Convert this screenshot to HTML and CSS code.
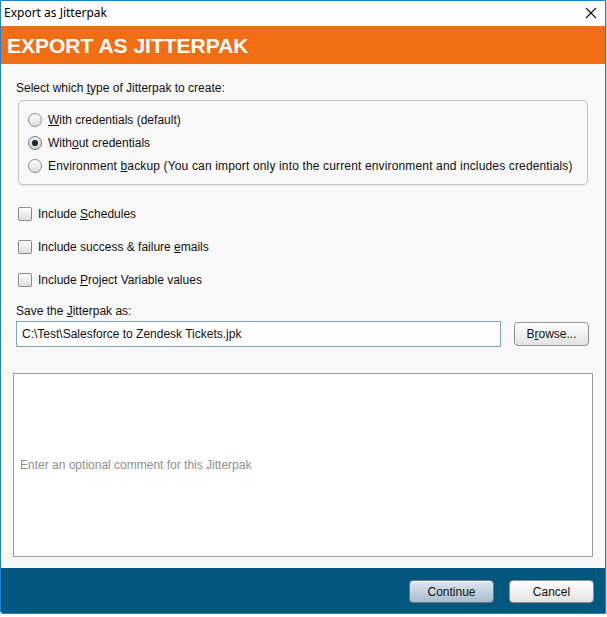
FILE: index.html
```html
<!DOCTYPE html>
<html lang="en">
<head>
  <meta charset="UTF-8" />
  <title>Export as Jitterpak</title>
  <link rel="stylesheet" href="styles.css">
</head>
<body>
  <div class="window">
    <div class="titlebar">
      <span class="title">Export as Jitterpak</span>
      <svg class="close" width="12" height="12" viewBox="0 0 12 12">
        <path d="M1 1 L11 11 M11 1 L1 11" stroke="#111" stroke-width="1.1" fill="none" />
      </svg>
    </div>

    <div class="banner">EXPORT AS JITTERPAK</div>

    <div class="content">
      <div class="label">Select which <u>t</u>ype of Jitterpak to create:</div>
      <div class="groupbox">
        <div class="row"><span class="radio"></span><span><u>W</u>ith credentials (default)</span></div>
        <div class="row"><span class="radio checked"></span><span>With<u>o</u>ut credentials</span></div>
        <div class="row"><span class="radio"></span><span class="wide">Environment <u>b</u>ackup (You can import only into the current environment and includes credentials)</span></div>
      </div>

      <div class="checks">
        <div class="check-row"><span class="checkbox"></span><span>Include <u>S</u>chedules</span></div>
        <div class="check-row"><span class="checkbox"></span><span>Include success &amp; failure <u>e</u>mails</span></div>
        <div class="check-row"><span class="checkbox"></span><span>Include <u>P</u>roject Variable values</span></div>
      </div>

      <div class="label save-label">Save the <u>J</u>itterpak as:</div>
      <div class="file-row">
        <div class="file-input">C:\Test\Salesforce to Zendesk Tickets.jpk</div>
        <button class="btn browse">B<u>r</u>owse...</button>
      </div>

      <div class="comment">Enter an optional comment for this Jitterpak</div>
    </div>

    <div class="footer">
      <button class="btn default">Continue</button>
      <button class="btn">Cancel</button>
    </div>
  </div>
</body>
</html>
```

FILE: styles.css
```css
body {
  margin: 0;
  background-color: #fff;
  font-family: "Liberation Sans", Arial, sans-serif;
  font-size: 12px;
  color: #111;
}
u {
  text-decoration: underline;
  text-underline-offset: 1px;
}
.window {
  width: 604px;
  height: 612px;
  border: 1px solid #1883d7;
  border-bottom-left-radius: 3px;
  display: flex;
  flex-direction: column;
  overflow: hidden;
  box-shadow: 1px 1px 2px rgba(0,0,0,0.25);
}
.titlebar {
  height: 25px;
  background-color: #fff;
  display: flex;
  align-items: center;
  justify-content: space-between;
  padding: 0 8px 0 3px;
}
.title {
  font-family: "Noto Sans", "Open Sans", sans-serif;
  font-size: 12px;
  color: #000;
  margin-top: -2px;
}
.close {
  margin-top: -2px;
}
.banner {
  height: 38px;
  background-color: #f26e14;
  color: #fff;
  font-weight: bold;
  font-size: 21px;
  display: flex;
  align-items: center;
  padding-left: 6px;
  padding-top: 1px;
  box-sizing: border-box;
}
.content {
  flex: 1;
  background-color: #f8f8f8;
  padding: 16px 0 0 15px;
}
.label {
  height: 16px;
  line-height: 16px;
}
.groupbox {
  margin: 4px 0 0 2px;
  width: 570px;
  height: 85px;
  border: 1px solid #c4c4c4;
  border-radius: 5px;
  box-shadow: 0 1px 1px rgba(0,0,0,0.08);
  padding-top: 7px;
  box-sizing: border-box;
}
.row {
  height: 23px;
  display: flex;
  align-items: center;
  padding-left: 9px;
}
.wide {
  letter-spacing: 0.15px;
}
.radio {
  width: 12px;
  height: 12px;
  border: 1px solid #8c8c8c;
  border-radius: 50%;
  background: linear-gradient(#fdfdfd, #dcdcdc);
  margin-right: 6px;
  position: relative;
}
.radio.checked {
  border-color: #6f7a86;
  background: linear-gradient(#eef3f8, #c8d2dc);
}
.radio.checked::after {
  content: "";
  position: absolute;
  left: 3px;
  top: 3px;
  width: 6px;
  height: 6px;
  border-radius: 50%;
  background: #222;
}
.checks {
  margin-top: 12px;
}
.check-row {
  height: 33px;
  display: flex;
  align-items: center;
  padding-left: 2px;
}
.checkbox {
  width: 12px;
  height: 12px;
  border: 1px solid #8a8a8a;
  border-radius: 2px;
  background: linear-gradient(#fdfdfd, #dedede);
  margin-right: 6px;
}
.save-label {
  margin-top: 7px;
}
.file-row {
  display: flex;
  align-items: center;
  margin-top: 2px;
}
.file-input {
  height: 24px;
  line-height: 24px;
  border: 1px solid #7da2ce;
  background: #fff;
  padding-left: 5px;
  width: 478px;
}
.btn {
  font-family: "Liberation Sans", Arial, sans-serif;
  font-size: 12px;
  color: #111;
  height: 24px;
  border: 1px solid #8f8f8f;
  border-radius: 4px;
  background: linear-gradient(#fefefe, #e2e2e2);
  padding: 0;
  box-shadow: inset 0 1px 0 #fff;
}
.browse {
  width: 75px;
  margin-left: 13px;
}
.comment {
  margin: 26px 0 0 -3px;
  height: 182px;
  border: 1px solid #9a9aa4;
  background: #fff;
  color: #8e8e8e;
  display: flex;
  align-items: center;
  padding-left: 6px;
  width: 572px;
}
.footer {
  height: 45px;
  background-color: #04587f;
  display: flex;
  justify-content: flex-end;
  align-items: flex-start;
  gap: 15px;
  padding: 12px 11px 0 0;
  box-sizing: border-box;
}
.footer .btn {
  width: 85px;
  height: 23px;
}
.footer .btn.default {
  border-color: #6c7a88;
  background: linear-gradient(#dde7f0, #a9bccd);
}
```
